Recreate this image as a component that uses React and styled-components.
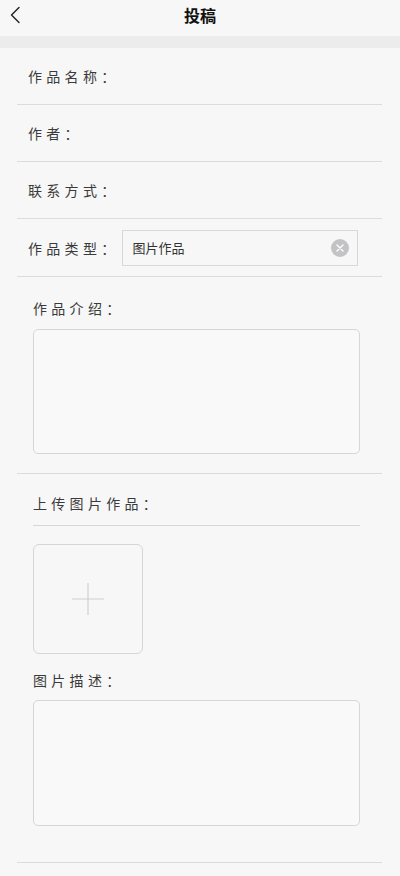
import React from 'react';
import styled, { createGlobalStyle } from 'styled-components';

const GlobalStyle = createGlobalStyle`
  html, body {
    margin: 0;
    padding: 0;
    background: #f7f7f7;
  }
  body {
    font-family: "Noto Sans CJK SC", "Noto Sans", sans-serif;
    color: #333;
  }
`;

const Page = styled.div`
  width: 400px;
  min-height: 876px;
  background: #f7f7f7;
`;

const Header = styled.header`
  height: 36px;
  display: flex;
  align-items: flex-start;
  justify-content: center;
  position: relative;
`;

const BackButton = styled.button`
  position: absolute;
  left: 4px;
  top: 3px;
  width: 22px;
  height: 24px;
  padding: 0;
  border: none;
  background: none;
  display: flex;
  align-items: center;
  justify-content: center;
`;

const Title = styled.h1`
  margin: 0;
  font-size: 16px;
  font-weight: 700;
  color: #111;
  line-height: 31px;
`;

const Band = styled.div`
  height: 12px;
  background: #ececec;
`;

const Form = styled.div`
  margin: 0 18px 0 17px;
`;

const Row = styled.div`
  height: ${(p) => p.$height || 56}px;
  display: flex;
  align-items: center;
  padding-left: 11px;
  border-bottom: 1px solid #dcdcdc;
`;

const Label = styled.span`
  font-size: 14px;
  letter-spacing: 4.3px;
  color: #3a3a3a;
  line-height: 20px;
  white-space: nowrap;
`;

const SelectBox = styled.div`
  margin-left: 2px;
  width: 236px;
  height: 36px;
  box-sizing: border-box;
  border: 1px solid #d8d8d8;
  display: flex;
  align-items: center;
  justify-content: space-between;
  padding: 0 8px 0 10px;
  font-size: 13px;
  color: #333;
`;

const ClearIcon = styled.span`
  width: 18px;
  height: 18px;
  border-radius: 50%;
  background: #c3c3c6;
  display: flex;
  align-items: center;
  justify-content: center;
`;

const Section = styled.div`
  padding: ${(p) => p.$top}px 22px ${(p) => p.$bottom}px 16px;
  border-bottom: 1px solid #dcdcdc;
  display: flex;
  flex-direction: column;
`;

const BlockLabel = styled(Label)`
  display: block;
  margin-bottom: ${(p) => p.$gap || 11}px;
`;

const TextBox = styled.textarea`
  display: block;
  width: 100%;
  height: ${(p) => p.$height}px;
  box-sizing: border-box;
  border: 1px solid #d6d6d6;
  border-radius: 5px;
  background: #f9f9f9;
  resize: none;
  outline: none;
  font-family: inherit;
`;

const UploadTitle = styled.div`
  padding-bottom: 11px;
  border-bottom: 1px solid #d6d6d6;
`;

const UploadBox = styled.div`
  margin-top: 18px;
  width: 110px;
  height: 110px;
  box-sizing: border-box;
  border: 1px solid #d6d6d6;
  border-radius: 6px;
  display: flex;
  align-items: center;
  justify-content: center;
`;

const DescLabel = styled(BlockLabel)`
  margin-top: 16px;
`;

export default function App() {
  return (
    <Page>
      <GlobalStyle />
      <Header>
        <BackButton aria-label="返回">
          <svg width="12" height="18" viewBox="0 0 12 18" fill="none">
            <path d="M10 1.5 L2.5 9 L10 16.5" stroke="#222" strokeWidth="1.4" strokeLinecap="round" strokeLinejoin="round" />
          </svg>
        </BackButton>
        <Title>投稿</Title>
      </Header>
      <Band />
      <Form>
        <Row><Label>作品名称：</Label></Row>
        <Row><Label>作者：</Label></Row>
        <Row><Label>联系方式：</Label></Row>
        <Row $height={57}>
          <Label>作品类型：</Label>
          <SelectBox>
            图片作品
            <ClearIcon>
              <svg width="8" height="8" viewBox="0 0 8 8">
                <path d="M1 1 L7 7 M7 1 L1 7" stroke="#fff" strokeWidth="1.4" strokeLinecap="round" />
              </svg>
            </ClearIcon>
          </SelectBox>
        </Row>
        <Section $top={21} $bottom={19}>
          <BlockLabel>作品介绍：</BlockLabel>
          <TextBox $height={125} />
        </Section>
        <Section $top={16} $bottom={36}>
          <UploadTitle>
            <Label>上传图片作品：</Label>
          </UploadTitle>
          <UploadBox>
            <svg width="32" height="32" viewBox="0 0 32 32">
              <path d="M16 0 V32 M0 16 H32" stroke="#cfcfcf" strokeWidth="1.2" />
            </svg>
          </UploadBox>
          <DescLabel $gap={10}>图片描述：</DescLabel>
          <TextBox $height={126} />
        </Section>
      </Form>
    </Page>
  );
}
